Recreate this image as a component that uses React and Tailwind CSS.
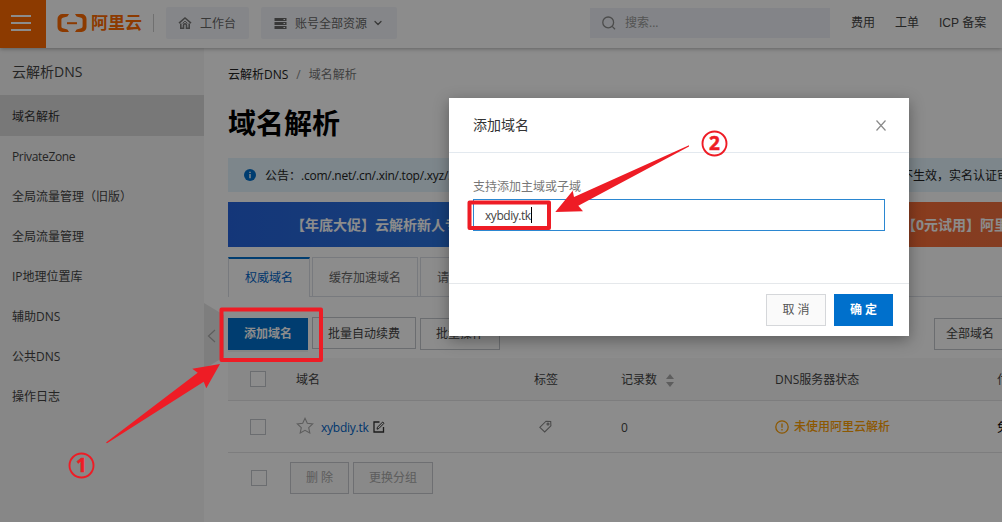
import { ChevronDown } from 'lucide-react'

const NAV_ITEMS = [
  '域名解析',
  'PrivateZone',
  '全局流量管理（旧版）',
  '全局流量管理',
  'IP地理位置库',
  '辅助DNS',
  '公共DNS',
  '操作日志',
]

const ROW = 'grid grid-cols-[68px_238px_87px_154px_222px_60px] items-center border-b border-[#e3e4e6]'

function Checkbox({ className = '' }) {
  return <span className={`block h-4 w-4 border border-[#c4c6cc] bg-white ${className}`} />
}

function HomeIcon() {
  return (
    <svg width="14" height="14" viewBox="0 0 14 14" fill="none" stroke="#777" strokeWidth="1.6">
      <path d="M1 7.2 7 2l6 5.2" />
      <path d="M2.8 7.5v4.7h2.7V9.3a1.5 1.5 0 0 1 3 0v2.9h2.7V7.5" />
      <path d="M4.5 7.3 7 5.2l2.5 2.1" strokeWidth="1" />
    </svg>
  )
}

function ServerIcon() {
  return (
    <svg width="13" height="13" viewBox="0 0 13 13" fill="#666">
      <path d="M.5 1h12v3H.5zM.5 5h12v3H.5zM.5 9h12v3H.5z" />
      <path d="M9.5 2h1.6v1H9.5zM9.5 6h1.6v1H9.5zM9.5 10h1.6v1H9.5z" fill="#f3f5f9" />
    </svg>
  )
}

function Logo() {
  return (
    <svg width="30" height="18" viewBox="0 0 30 18" fill="#ff6a00">
      <path d="M12 0H5.5A5 5 0 0 0 .5 5v8a5 5 0 0 0 5 5H12l-1.6-2.6-4.6-1.2a1.9 1.9 0 0 1-1.4-1.9V5.7a1.9 1.9 0 0 1 1.4-1.9l4.6-1.2z" />
      <path d="M18 0h6.5a5 5 0 0 1 5 5v8a5 5 0 0 1-5 5H18l1.6-2.6 4.6-1.2a1.9 1.9 0 0 0 1.4-1.9V5.7a1.9 1.9 0 0 0-1.4-1.9l-4.6-1.2z" />
      <path d="M10 8.2h10v2H10z" />
    </svg>
  )
}

function Header() {
  return (
    <header className="relative z-10 flex h-12 w-[1002px] items-center bg-white text-[#666] shadow-[0_1px_4px_rgba(0,0,0,0.3)]">
      <div className="flex h-12 w-[46px] flex-col items-center justify-center gap-[5px] bg-[#ff6a00] pr-[4px] pb-[2px]">
        <i className="block h-0.5 w-5 bg-white" />
        <i className="block h-0.5 w-5 bg-white" />
        <i className="block h-0.5 w-5 bg-white" />
      </div>
      <div className="ml-[11px] flex w-[85px] items-center gap-[4px] pb-[2px]">
        <Logo />
        <span className="text-[17px] leading-[18px] font-bold whitespace-nowrap text-[#ff6a00]">阿里云</span>
      </div>
      <div className="mb-[2px] ml-[11px] h-[18px] w-px bg-[#ccc]" />
      <div className="mb-[2px] ml-[12px] flex h-8 w-[83px] items-center gap-2 rounded-xs bg-[#f3f5f9] pl-3">
        <HomeIcon />
        <span className="pt-px">工作台</span>
      </div>
      <div className="mb-[2px] ml-3 flex h-8 w-[136px] items-center rounded-xs bg-[#f3f5f9] pl-[13px]">
        <ServerIcon />
        <span className="mr-[5px] ml-2 pt-px">账号全部资源</span>
        <ChevronDown size={12} strokeWidth={2.6} />
      </div>
      <div className="mb-[2px] ml-[193px] flex h-[30px] w-[240px] items-center bg-[#eef1f7] pl-[12px] text-[#999]">
        <svg width="14" height="14" viewBox="0 0 14 14" fill="none" stroke="#8a8a8a" strokeWidth="1.3">
          <circle cx="6.2" cy="6.4" r="5.4" />
          <path d="m10.2 10.4 2.8 2.8" />
        </svg>
        <span className="ml-[9px]">搜索...</span>
      </div>
      <nav className="ml-[21px] flex gap-5 pb-[2px] font-['Liberation_Sans','Noto_Sans_CJK_SC',sans-serif] whitespace-nowrap text-[#444]">
        <span>费用</span>
        <span>工单</span>
        <span>ICP 备案</span>
      </nav>
    </header>
  )
}

function Sidebar() {
  return (
    <aside className="relative w-[204px] shrink-0 bg-[#f6f6f6] text-[#444]">
      <h2 className="flex h-[47px] items-center pl-3 text-sm">云解析DNS</h2>
      {NAV_ITEMS.map((item, i) => (
        <div
          key={item}
          className={`flex items-center pl-3 ${i === 0 ? 'h-[41px] bg-[#dbdbdb] pt-[3px] text-[#333]' : 'h-10 pt-[2px]'} ${item === 'PrivateZone' ? 'tracking-[-0.35px]' : ''}`}
        >
          {item}
        </div>
      ))}
      <svg className="absolute top-[255px] left-[204px]" width="20" height="66" viewBox="0 0 20 66">
        <path d="M0 0 20 12V54L0 66z" fill="#e6e6e6" />
        <path d="m11 27-6.500 6 6.500 6" fill="none" stroke="#aaa" strokeWidth="1.2" />
      </svg>
    </aside>
  )
}

function Notice() {
  return (
    <div className="mt-[17px] flex h-[34px] items-center bg-[#e3f4fd] pl-4 whitespace-nowrap text-[#222]">
      <svg className="shrink-0" width="12" height="12" viewBox="0 0 12 12">
        <circle cx="6" cy="6" r="6" fill="#0070cc" />
        <path d="M5.3 2.7h1.4v1.2H5.3zM5.3 5h1.4v4.200H5.3z" fill="#fff" />
      </svg>
      <span className="ml-[9px] w-[636px] shrink-0 overflow-hidden pt-[2px]">
        公告：<span className="tracking-[-0.25px]">.com/.net/.cn/.xin/.top/.xyz/.vip</span>
      </span>
      <span className="shrink-0 pt-[2px]">不生效，实名认证审核</span>
    </div>
  )
}

function Banners() {
  return (
    <div className="mt-[10px] flex h-[45px] text-sm font-bold whitespace-nowrap text-white">
      <div className="flex w-[380px] shrink-0 items-center bg-linear-to-r from-[#2663dc] to-[#2f7fe0] pl-[63px]">
        【年底大促】云解析新人专享
      </div>
      <div className="ml-4 flex w-[500px] shrink-0 items-center bg-linear-to-r from-[#fa6c36] from-55% to-[#ee7040] to-80% pl-[278px]">
        【0元试用】阿里云解析
      </div>
    </div>
  )
}

function Tabs() {
  return (
    <div className="mt-[10px] flex h-10 text-[#666]">
      <div className="flex w-[82px] items-center justify-center border-x border-t-2 border-x-[#dadfe6] border-t-[#0070cc] text-[#0064c8]">
        权威域名
      </div>
      <div className="w-[2px] border-b border-[#dadfe6]" />
      <div className="flex w-[106px] items-center justify-center border border-[#dadfe6] pt-px">缓存加速域名</div>
      <div className="w-[2px] border-b border-[#dadfe6]" />
      <div className="flex w-[106px] items-center border border-[#dadfe6] pt-px pl-4">请求量统计</div>
      <div className="flex-1 border-b border-[#dadfe6]" />
    </div>
  )
}

function Toolbar() {
  return (
    <div className="mt-[21px] flex h-8 gap-1 whitespace-nowrap text-[#444]">
      <div className="flex w-20 shrink-0 items-center justify-center bg-[#0070cc] font-bold text-white shadow-[0_2px_0_rgba(0,0,0,0.06)]">
        添加域名
      </div>
      <div className="-mt-px flex h-8 w-[104px] shrink-0 items-center justify-center border border-[#c4c6cc] pt-[2px]">
        批量自动续费
      </div>
      <div className="flex w-20 shrink-0 items-center justify-center border border-[#c4c6cc]">批量操作</div>
      <div className="ml-[430px] flex w-[110px] shrink-0 items-center border border-[#c4c6cc] pl-[11px]">全部域名</div>
    </div>
  )
}

function DomainTable() {
  return (
    <div className="mt-2 w-[829px] whitespace-nowrap text-[#444]">
      <div className={`${ROW} h-[43px] bg-[#f7f7f8]`}>
        <Checkbox className="ml-[22px]" />
        <span className="pt-[2px]">域名</span>
        <span className="pt-[2px]">标签</span>
        <span className="flex items-center pt-[2px]">
          记录数
          <svg className="ml-[9px]" width="8" height="13" viewBox="0 0 8 13" fill="#aaa">
            <path d="M4 0 8 5H0zM4 13 0 8h8z" />
          </svg>
        </span>
        <span className="pt-[2px]">DNS服务器状态</span>
        <span className="pt-[2px]">付费版本</span>
      </div>
      <div className={`${ROW} h-[52px]`}>
        <Checkbox className="ml-[22px]" />
        <span className="flex items-center">
          <svg className="mb-[2px]" width="18" height="18" viewBox="0 0 18 18" fill="none" stroke="#aaa" strokeWidth="1.1">
            <path d="m9 1.300 2.300 5 5.400.6-4 3.700 1.100 5.400L9 13.300 4.200 16l1.100-5.400-4-3.700 5.400-.6z" />
          </svg>
          <span className="mr-[4px] ml-[7px] pt-[2px] tracking-[-0.25px] text-[#0064c8]">xybdiy.tk</span>
          <svg width="12" height="12" viewBox="0 0 12 12" fill="none" stroke="#333" strokeWidth="1.3">
            <path d="M6.500 1H1v10h9.500V6" />
            <path d="M4 8.200 4.500 6.200 9.700 1l1.300 1.300-5.200 5.200z" strokeWidth="1" />
          </svg>
        </span>
        <svg className="ml-[5px]" width="13" height="13" viewBox="0 0 13 13" fill="none" stroke="#888" strokeWidth="1.1">
          <path d="M.8 7.300 7 1.200l4.700.3.2 4.300-6.200 6.200z" />
          <circle cx="9" cy="4" r="1" />
        </svg>
        <span className="pt-[2px]">0</span>
        <span className="flex items-center gap-[5px] font-medium text-[#ffa003]">
          <svg width="14" height="14" viewBox="0 0 14 14" fill="none" stroke="#ffa003" strokeWidth="1.3">
            <circle cx="7" cy="7" r="6.200" />
            <path d="M7 3.500v4.200M7 9v1.500" />
          </svg>
          未使用阿里云解析
        </span>
        <span className="pt-[2px] text-[#000]">免费版</span>
      </div>
      <div className="mt-[9px] flex h-8 items-center gap-1 text-[#aaa]">
        <Checkbox className="mr-[19px] ml-[23px]" />
        <div className="flex h-8 w-[59px] items-center justify-center border border-[#c8cacf] bg-[#f9f9f9]">删 除</div>
        <div className="flex h-8 w-20 items-center justify-center border border-[#c8cacf] bg-[#f9f9f9]">更换分组</div>
      </div>
    </div>
  )
}

function AddDomainDialog() {
  return (
    <div className="absolute top-[98px] left-[449px] z-30 flex h-[238px] w-[460px] flex-col bg-white shadow-[0_4px_14px_rgba(0,0,0,0.35)]">
      <div className="flex h-[55px] items-center justify-between border-b border-[#e3e9ef] px-6 text-sm text-[#333]">
        添加域名
        <svg className="mr-[-1px]" width="10" height="11" viewBox="0 0 10 11" fill="none" stroke="#8a8a8a" strokeWidth="1.2">
          <path d="m.5.5 9 10M9.500.5l-9 10" />
        </svg>
      </div>
      <div className="h-[130px] px-6 pt-[25px] text-[#777]">
        <p className="leading-[18px]">支持添加主域或子域</p>
        <div className="mt-[3px] flex h-8 items-center border border-[#2b87d1] pl-[11px] text-[#444]">
          <span className="pt-[2px] tracking-[-0.45px]">xybdiy.tk</span>
          <span className="h-4 w-px bg-black" />
        </div>
      </div>
      <div className="flex flex-1 items-start justify-end gap-2 border-t border-[#e5e8eb] pt-[10px] pr-4">
        <div className="flex h-8 w-[60px] items-center justify-center border border-[#d5d7da] bg-[#fafafa] text-[#555]">取 消</div>
        <div className="flex h-8 w-[59px] items-center justify-center bg-[#0070cc] font-bold text-white">确 定</div>
      </div>
    </div>
  )
}

function Annotations() {
  return (
    <svg className="absolute inset-0 z-40" width="1002" height="522" viewBox="0 0 1002 522" fill="none" stroke="#ee1c25">
      <g strokeWidth="4" strokeLinejoin="round">
        <rect x="221.500" y="309.500" width="99.500" height="50.500" />
        <rect x="469.500" y="202.500" width="79.500" height="25.500" />
      </g>
      <g fill="#ee1c25" stroke="none">
        <path d="m106 442.500 91.700-69.800-5.400-4L220 364l-13.700 24.300-2.600-6.600L107 443.200z" />
        <path d="M689 145.200 574 197l-1.300-6.300L555.300 212l27.700-.7-4.700-5.600L689 146.500z" />
      </g>
      <g strokeWidth="1.900">
        <circle cx="81.500" cy="465.500" r="12" />
        <circle cx="714.500" cy="143.500" r="12" />
      </g>
      <g fill="#ee1c25" strokeWidth="0.5" fontSize="19" fontWeight="700" textAnchor="middle" className="font-['Noto_Sans',sans-serif]">
        <text x="81.500" y="472">1</text>
        <text x="714.500" y="150">2</text>
      </g>
    </svg>
  )
}

export default function App() {
  return (
    <div className="relative flex h-[522px] w-[1002px] flex-col overflow-hidden bg-white font-['Open_Sans','Noto_Sans_CJK_SC',sans-serif] text-xs">
      <Header />
      <div className="flex min-h-0 flex-1">
        <Sidebar />
        <main className="w-[798px] shrink-0 overflow-hidden pl-6">
          <div className="flex h-[35px] gap-2 pt-[19px] whitespace-nowrap">
            <span className="text-[#222]">云解析DNS</span>
            <span className="text-[#888]">/</span>
            <span className="text-[#777]">域名解析</span>
          </div>
          <h1 className="mt-[22px] text-[28px] leading-9 font-bold text-black">域名解析</h1>
          <Notice />
          <Banners />
          <Tabs />
          <Toolbar />
          <DomainTable />
        </main>
      </div>
      <div className="absolute inset-0 z-20 bg-black/45" />
      <AddDomainDialog />
      <Annotations />
    </div>
  )
}
